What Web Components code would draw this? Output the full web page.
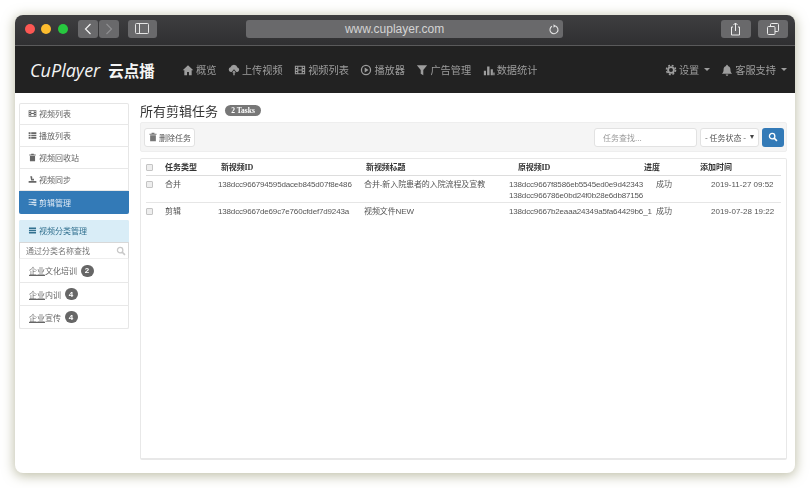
<!DOCTYPE html>
<html lang="zh">
<head>
<meta charset="utf-8">
<title>CuPlayer</title>
<style>
    html, body { margin: 0; height: 100%; background: #fff; }
    body {
        padding: 15px;
        box-sizing: border-box;
        height: 488px;
        overflow: hidden;
        font-family: "Liberation Sans", "Noto Sans CJK SC", sans-serif;
        font-size: 8px;
        color: #444;
    }
</style>
</head>
<body>
<app-window>
    <safari-bar url="www.cuplayer.com"></safari-bar>
    <top-nav>
        <nav-link icon="home">概览</nav-link>
        <nav-link icon="upload">上传视频</nav-link>
        <nav-link icon="film">视频列表</nav-link>
        <nav-link icon="play">播放器</nav-link>
        <nav-link icon="filter">广告管理</nav-link>
        <nav-link icon="stats">数据统计</nav-link>
        <nav-link slot="right" icon="cog" caret>设置</nav-link>
        <nav-link slot="right" icon="bell" caret>客服支持</nav-link>
    </top-nav>
    <main-area>
        <side-bar slot="side">
            <side-group>
                <side-item icon="film">视频列表</side-item>
                <side-item icon="list">播放列表</side-item>
                <side-item icon="trash">视频回收站</side-item>
                <side-item icon="sync">视频同步</side-item>
                <side-item icon="tasks" active>剪辑管理</side-item>
            </side-group>
            <side-group>
                <side-item icon="menu" head>视频分类管理</side-item>
                <side-search></side-search>
                <cat-item count="2"><u>企业</u>文化培训</cat-item>
                <cat-item count="4"><u>企业</u>内训</cat-item>
                <cat-item count="4"><u>企业</u>宣传</cat-item>
            </side-group>
        </side-bar>
        <page-title count="2 Tasks">所有剪辑任务</page-title>
        <tool-bar></tool-bar>
        <task-table>
            <task-row head type="任务类型" vid="新视频ID" name="新视频标题" src="原视频ID" state="进度" time="添加时间"></task-row>
            <task-row type="合并" vid="138dcc966794595daceb845d07f8e486" name="合并-新入院患者的入院流程及宣教" src="138dcc9667f8586eb5545ed0e9d42343|138dcc966786e0bd24f0b28e6db87156" state="成功" time="2019-11-27 09:52"></task-row>
            <task-row type="剪辑" vid="138dcc9667de69c7e760cfdef7d9243a" name="视频文件NEW" src="138dcc9667b2eaaa24349a5fa64429b6_1" state="成功" time="2019-07-28 19:22"></task-row>
        </task-table>
    </main-area>
</app-window>

<script>
const ICONS = {
    home: '<path d="M7 1.500 .8 7.400h1.900V13h3.200V9.200h2.200V13h3.200V7.400h1.900z"/>',
    upload: '<path d="M3.200 9.200a2.700 2.700 0 0 1-.3-5.300A4.200 4.200 0 0 1 11 4a2.700 2.700 0 0 1 .1 5.200H9.800L7 6 4.200 9.200z"/><path d="M7 7.500 4.800 10h1.400v3h1.600v-3h1.400z"/>',
    film: '<path fill-rule="evenodd" d="M1 2h12v10H1zm1.200 1.200v1.600h1.600V3.200zm0 3v1.600h1.600V6.200zm0 3v1.600h1.600V9.200zm8-6v1.600h1.600V3.200zm0 3v1.600h1.600V6.200zm0 3v1.600h1.600V9.200zM5 3.200v3.200h4V3.200zm0 4.400v3.200h4V7.600z"/>',
    play: '<circle cx="7" cy="7" r="5.300" fill="none" stroke="currentColor" stroke-width="1.500"/><path d="M5.500 4.200 10 7l-4.500 2.800z"/>',
    filter: '<path d="M1 1.500h12L8.500 7v6l-3-1.500V7z"/>',
    stats: '<path d="M1 8h2.500v5H1zM4.800 3h2.800v10H4.800zM9 6h2.500v7H9zM12 10h1.500v3H12z"/>',
    cog: '<circle cx="7" cy="7" r="3.400" fill="none" stroke="currentColor" stroke-width="2.200"/><circle cx="7" cy="7" r="5.300" fill="none" stroke="currentColor" stroke-width="1.800" stroke-dasharray="2.200 2"/>',
    bell: '<path d="M7 .8c.6 0 1 .4 1 1v.5c2 .5 3 2 3 4 0 2.500.6 3.600 2 5H1c1.400-1.400 2-2.500 2-5 0-2 1-3.500 3-4v-.5c0-.6.400-1 1-1zM5.500 12.300h3c0 1-.6 1.500-1.500 1.500s-1.500-.5-1.500-1.500z"/>',
    trash: '<path d="M5 1h4v1.300h3v1.500H2V2.300h3zM3 4.500h8V13H3z"/>',
    list: '<path d="M1 2h3v2.500H1zM5 2h8v2.500H5zM1 5.700h3v2.500H1zM5 5.700h8v2.500H5zM1 9.500h3V12H1zM5 9.500h8V12H5z"/>',
    sync: '<path d="M3.500 2h2.800l.7 4.500 2-1.200.5 3.200H5zM1 9.500h12V12H1z"/>',
    tasks: '<path d="M1 2h12v2.400H8V3.200H1zM1 5.800h12v2.400H5.500V7H1zM1 9.600h12V12H9v-1.200H1z"/>',
    menu: '<path d="M1.500 2.500h11v2h-11zM1.500 6h11v2h-11zM1.500 9.500h11v2h-11z"/>',
    search: '<circle cx="5.800" cy="5.800" r="3.800" fill="none" stroke="currentColor" stroke-width="1.800"/><path d="M8.600 8.600 12.500 12.500" stroke="currentColor" stroke-width="2.200"/>'
};

class CuIcon extends HTMLElement {
    connectedCallback() {
        const size = this.getAttribute('size') || 11;
        this.attachShadow({ mode: 'open' }).innerHTML = `
        <style>:host { display: inline-flex; flex: none; }</style>
        <svg width="${size}" height="${size}" viewBox="0 0 14 14" fill="currentColor">${ICONS[this.getAttribute('name')]}</svg>`;
    }
}

class AppWindow extends HTMLElement {
    constructor() {
        super();
        this.attachShadow({ mode: 'open' }).innerHTML = `
        <style>
            :host {
                display: flex;
                flex-direction: column;
                width: 780px;
                height: 458px;
                background: #fff;
                border-radius: 8px;
                box-shadow: 0 2px 12px 1px rgba(130, 130, 85, .5);
                overflow: hidden;
                filter: blur(.45px);
            }
        </style>
        <slot></slot>`;
    }
}

class SafariBar extends HTMLElement {
    connectedCallback() {
        this.attachShadow({ mode: 'open' }).innerHTML = `
        <style>
            :host {
                display: flex;
                align-items: center;
                flex: none;
                box-sizing: border-box;
                height: 31px;
                padding: 0 7px 3px 10px;
                background: linear-gradient(#3e3e40, #2f2f31);
                border-bottom: 1px solid #5a5a5b;
            }
            .dot { width: 10px; height: 10px; border-radius: 50%; margin-right: 6.300px; }
            .btn {
                display: flex; align-items: center; justify-content: center;
                height: 18px; background: #69696b; border-radius: 3px; color: #e8e8e8;
            }
            .url {
                position: relative;
                box-sizing: border-box;
                width: 317px; margin: 0 0 0 89px; padding-right: 19px;
                font: 12px "Liberation Sans", sans-serif; color: #d4d4d4;
            }
            .url svg { position: absolute; right: 4px; top: 4px; }
            svg { display: block; }
        </style>
        <span class="dot" style="background:#fc5753"></span>
        <span class="dot" style="background:#fdbc2e"></span>
        <span class="dot" style="background:#27c83f;margin-right:10px"></span>
        <span class="btn" style="width:20px;margin-right:1px">
            <svg width="8" height="12" viewBox="0 0 8 12" fill="none" stroke="#f2f2f2" stroke-width="1.200"><path d="M6.500 1 1.500 6l5 5"/></svg>
        </span>
        <span class="btn" style="width:20px;margin-right:9px">
            <svg width="8" height="12" viewBox="0 0 8 12" fill="none" stroke="#8e8e90" stroke-width="1.200"><path d="M1.500 1l5 5-5 5"/></svg>
        </span>
        <span class="btn" style="width:29px">
            <svg width="14" height="11" viewBox="0 0 14 11" fill="none" stroke="#e4e4e4"><rect x=".5" y=".5" width="13" height="10" rx="1"/><path d="M4.500 .5v10"/></svg>
        </span>
        <span class="btn url">${this.getAttribute('url')}
            <svg width="10" height="11" viewBox="0 0 10 11" fill="none" stroke="#e4e4e4" stroke-width="1.100"><path d="M6.500 2A4 4 0 1 1 3 2.200"/><path d="M4.500 .3 7 2 4.500 3.700z" fill="#e4e4e4" stroke="none"/></svg>
        </span>
        <span class="btn" style="width:30px;margin-left:158px">
            <svg width="11" height="14" viewBox="0 0 11 14" fill="none" stroke="#ececec"><path d="M3 5H1.500v8h8V5H8M5.500 9V1M3.500 3l2-2 2 2"/></svg>
        </span>
        <span class="btn" style="width:30px;margin-left:7px">
            <svg width="12" height="12" viewBox="0 0 12 12" fill="none" stroke="#ececec"><rect x=".5" y="3.500" width="7.500" height="8" rx="1"/><path d="M3.500 3.500v-2a1 1 0 0 1 1-1h6a1 1 0 0 1 1 1v6a1 1 0 0 1-1 1H8"/></svg>
        </span>`;
    }
}

class TopNav extends HTMLElement {
    constructor() {
        super();
        this.attachShadow({ mode: 'open' }).innerHTML = `
        <style>
            :host {
                display: flex;
                align-items: center;
                flex: none;
                height: 47px;
                padding: 0 8px 0 15px;
                background: #222;
            }
            .logo { display: flex; align-items: baseline; color: #f4f4f4; width: 152px; flex: none; white-space: nowrap; }
            .en { font: italic 18px "Open Sans", "Liberation Sans", sans-serif; }
            .cn { font: 700 15.500px "Noto Sans CJK SC", sans-serif; margin-left: 8px; }
            .left, .right { display: flex; align-items: center; gap: 11px; }
            .left { gap: 11.500px; }
            .right { margin-left: auto; }
        </style>
        <div class="logo"><span class="en">CuPlayer</span><span class="cn">云点播</span></div>
        <div class="left"><slot></slot></div>
        <div class="right"><slot name="right"></slot></div>`;
    }
}

class NavLink extends HTMLElement {
    connectedCallback() {
        const caret = this.hasAttribute('caret') ? '<i></i>' : '';
        this.attachShadow({ mode: 'open' }).innerHTML = `
        <style>
            :host {
                display: inline-flex;
                align-items: center;
                gap: 2px;
                color: #9d9d9d;
                font: 10.200px "Noto Sans CJK SC", sans-serif;
                white-space: nowrap;
            }
            i { width: 0; height: 0; margin-left: 3px; border: 3px solid transparent; border-top-color: #9d9d9d; border-bottom: 0; }
        </style>
        <cu-icon name="${this.getAttribute('icon')}" size="12"></cu-icon><slot></slot>${caret}`;
    }
}

class MainArea extends HTMLElement {
    constructor() {
        super();
        this.attachShadow({ mode: 'open' }).innerHTML = `
        <style>
            :host {
                display: flex;
                flex: 1;
                min-height: 0;
                gap: 11px;
                padding: 10px 8px 13px 4px;
            }
            .content { display: flex; flex-direction: column; flex: 1; min-width: 0; }
        </style>
        <slot name="side"></slot>
        <div class="content"><slot></slot></div>`;
    }
}

class SideBar extends HTMLElement {
    constructor() {
        super();
        this.attachShadow({ mode: 'open' }).innerHTML = `
        <style>:host { display: flex; flex-direction: column; gap: 6px; width: 110px; flex: none; }</style>
        <slot></slot>`;
    }
}

class SideGroup extends HTMLElement {
    constructor() {
        super();
        this.attachShadow({ mode: 'open' }).innerHTML = `
        <style>
            :host {
                display: flex;
                flex-direction: column;
                border-radius: 2px;
                box-shadow: 0 0 0 1px #e6e6e6 inset;
                overflow: hidden;
            }
        </style>
        <slot></slot>`;
    }
}

class SideItem extends HTMLElement {
    connectedCallback() {
        const active = this.hasAttribute('active');
        const head = this.hasAttribute('head');
        this.attachShadow({ mode: 'open' }).innerHTML = `
        <style>
            :host {
                display: flex;
                align-items: center;
                gap: 2px;
                box-sizing: border-box;
                height: ${active ? 23 : 22}px;
                padding-left: 9px;
                color: ${active ? '#dfeaf5' : head ? '#31708f' : '#666'};
                background: ${active ? '#337ab7' : head ? '#d9edf7' : 'transparent'};
                border-bottom: 1px solid ${active || head ? 'transparent' : '#e8e8e8'};
                font: 8px "Noto Sans CJK SC", sans-serif;
                white-space: nowrap;
            }
        </style>
        <cu-icon name="${this.getAttribute('icon')}" size="9"></cu-icon><slot></slot>`;
    }
}

class SideSearch extends HTMLElement {
    constructor() {
        super();
        this.attachShadow({ mode: 'open' }).innerHTML = `
        <style>
            :host {
                display: flex;
                align-items: center;
                justify-content: space-between;
                box-sizing: border-box;
                height: 17px;
                padding: 0 2px 0 6px;
                border: 1px solid #d8d8d8;
                border-bottom-color: #eee;
                color: #777;
                font: 8px "Noto Sans CJK SC", sans-serif;
            }
            cu-icon { color: #c8c8c8; }
        </style>
        <span>通过分类名称查找</span><cu-icon name="search" size="10"></cu-icon>`;
    }
}

class CatItem extends HTMLElement {
    connectedCallback() {
        this.attachShadow({ mode: 'open' }).innerHTML = `
        <style>
            :host {
                display: flex;
                align-items: center;
                gap: 3.500px;
                box-sizing: border-box;
                height: 23px;
                padding-left: 10px;
                border-bottom: 1px solid #e8e8e8;
                color: #666;
                font: 8px "Noto Sans CJK SC", sans-serif;
            }
            :host(:first-of-type) { height: 24px; }
            b {
                display: flex; align-items: center; justify-content: center;
                width: 13px; height: 12px; border-radius: 6px;
                background: #666; color: #fff;
                font: 700 8px "Liberation Sans", sans-serif;
            }
        </style>
        <span><slot></slot></span><b>${this.getAttribute('count')}</b>`;
    }
}

class PageTitle extends HTMLElement {
    connectedCallback() {
        this.attachShadow({ mode: 'open' }).innerHTML = `
        <style>
            :host {
                display: flex;
                align-items: center;
                gap: 7px;
                box-sizing: border-box;
                height: 19px;
                padding-bottom: 4px;
                color: #333;
                font: 13px "Noto Sans CJK SC", sans-serif;
            }
            b {
                display: block; box-sizing: border-box; width: 36px; height: 11px;
                border-radius: 6px; background: #777; color: #fff; text-align: center;
                font: 700 7.500px/11px "Liberation Serif", serif;
            }
        </style>
        <slot></slot><b>${this.getAttribute('count')}</b>`;
    }
}

class ToolBar extends HTMLElement {
    constructor() {
        super();
        this.attachShadow({ mode: 'open' }).innerHTML = `
        <style>
            :host {
                display: flex;
                align-items: center;
                flex: none;
                box-sizing: border-box;
                height: 30px;
                margin-bottom: 6px;
                padding: 0 2px 0 3px;
                background: #f5f5f5;
                border: 1px solid #eee;
                border-radius: 2px;
                font: 8px "Noto Sans CJK SC", sans-serif;
                color: #555;
            }
            .box {
                display: flex; align-items: center; box-sizing: border-box;
                height: 19px; background: #fff; border: 1px solid #e2e2e2; border-radius: 3px;
            }
            .del { width: 51px; padding-left: 3px; gap: 1px; }
            .del cu-icon { color: #777; }
            .find { width: 103px; margin-left: auto; padding-left: 8px; color: #999; }
            .state { width: 59px; margin-left: 3px; padding: 0 4px; justify-content: space-between; }
            .state i { border: 2.500px solid transparent; border-top: 4px solid #444; border-bottom: 0; }
            .go {
                display: flex; align-items: center; justify-content: center;
                width: 22px; height: 19px; margin-left: 3px;
                background: #337ab7; border-radius: 3px; color: #fff;
            }
        </style>
        <div class="box del"><cu-icon name="trash" size="10"></cu-icon>删除任务</div>
        <div class="box find">任务查找...</div>
        <div class="box state">- 任务状态 -<i></i></div>
        <div class="go"><cu-icon name="search" size="10"></cu-icon></div>`;
    }
}

class TaskTable extends HTMLElement {
    constructor() {
        super();
        this.attachShadow({ mode: 'open' }).innerHTML = `
        <style>
            :host {
                display: block;
                flex: 1;
                box-sizing: border-box;
                padding: 1px 5px 0 5px;
                border: 1px solid #e8e8e8;
                border-bottom-width: 2px;
                border-radius: 2px;
            }
        </style>
        <slot></slot>`;
    }
}

class TaskRow extends HTMLElement {
    connectedCallback() {
        const head = this.hasAttribute('head');
        const a = n => this.getAttribute(n);
        const src = a('src').split('|').map(s => `<div>${s}</div>`).join('');
        const cols = head ? '19px 56px 145px 152px 126px 56px 1fr' : '19px 53px 146px 145px 147px 55px 1fr';
        this.attachShadow({ mode: 'open' }).innerHTML = `
        <style>
            :host {
                display: grid;
                grid-template-columns: ${cols};
                box-sizing: border-box;
                height: ${head ? 16 : 27}px;
                padding-top: ${head ? 2 : 3}px;
                border-bottom: ${head ? '1px solid #ddd' : '1px solid #e6e6e6'};
                color: ${head ? '#333' : '#555'};
                font: ${head ? 700 : 400} 8px/11px ${head ? '"Liberation Serif", ' : '"Liberation Sans", '}"Noto Sans CJK SC", sans-serif;
                white-space: nowrap;
            }
            :host(:last-child) { border-bottom: 0; }
            i { display: block; box-sizing: border-box; width: 7px; height: 7px; margin-top: 2px; background: #eee; border: 1px solid #c4c4c4; border-radius: 1px; }
            .id { letter-spacing: -.02em; }
            .name { letter-spacing: -.1px; }
        </style>
        <span><i></i></span>
        <span>${a('type')}</span>
        <span class="id">${a('vid')}</span>
        <span class="name">${a('name')}</span>
        <span class="id">${src}</span>
        <span>${a('state')}</span>
        <span>${a('time')}</span>`;
    }
}

customElements.define('cu-icon', CuIcon);
customElements.define('app-window', AppWindow);
customElements.define('safari-bar', SafariBar);
customElements.define('top-nav', TopNav);
customElements.define('nav-link', NavLink);
customElements.define('main-area', MainArea);
customElements.define('side-bar', SideBar);
customElements.define('side-group', SideGroup);
customElements.define('side-item', SideItem);
customElements.define('side-search', SideSearch);
customElements.define('cat-item', CatItem);
customElements.define('page-title', PageTitle);
customElements.define('tool-bar', ToolBar);
customElements.define('task-table', TaskTable);
customElements.define('task-row', TaskRow);
</script>
</body>
</html>
